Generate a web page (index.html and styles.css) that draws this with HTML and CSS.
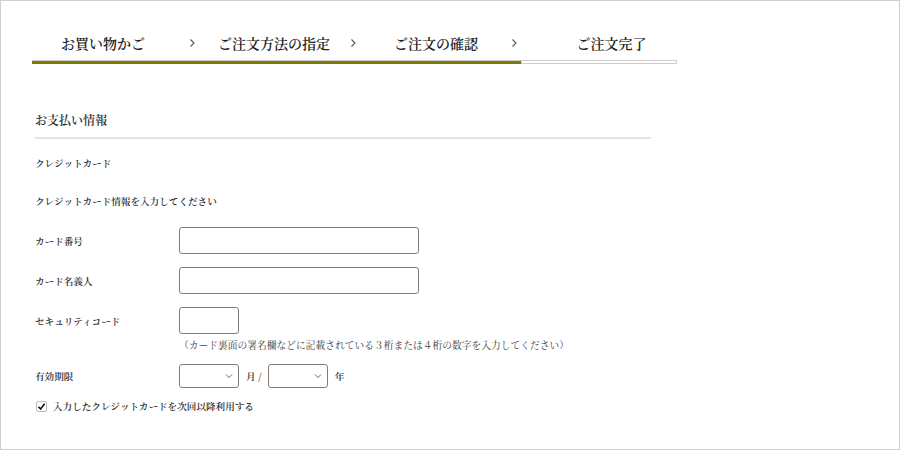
FILE: index.html
```html
<!DOCTYPE html>
<html lang="ja">
<head>
    <meta charset="UTF-8">
    <meta name="viewport" content="width=device-width, initial-scale=1.0">
    <title>お支払い情報</title>
    <link rel="stylesheet" href="styles.css">
</head>
<body>
    <div class="page">
        <!-- Steps -->
        <ol class="steps">
            <li class="step step-1">お買い物かご</li>
            <li class="sep"><svg width="7" height="10" viewBox="0 0 7 10"><polyline points="1.5,1.5 5,5 1.5,8.5" fill="none" stroke="#555" stroke-width="1.1"/></svg></li>
            <li class="step step-2">ご注文方法の指定</li>
            <li class="sep"><svg width="7" height="10" viewBox="0 0 7 10"><polyline points="1.5,1.5 5,5 1.5,8.5" fill="none" stroke="#555" stroke-width="1.1"/></svg></li>
            <li class="step step-3">ご注文の確認</li>
            <li class="sep"><svg width="7" height="10" viewBox="0 0 7 10"><polyline points="1.5,1.5 5,5 1.5,8.5" fill="none" stroke="#555" stroke-width="1.1"/></svg></li>
            <li class="step step-4">ご注文完了</li>
        </ol>
        <div class="progress">
            <div class="progress-fill"></div>
            <div class="progress-rest"></div>
        </div>

        <!-- Payment -->
        <section class="payment">
            <h2 class="section-title">お支払い情報</h2>
            <p class="method">クレジットカード</p>
            <p class="lead">クレジットカード情報を入力してください</p>

            <div class="form-row">
                <label class="form-label">カード番号</label>
                <input type="text" class="field field-wide">
            </div>
            <div class="form-row">
                <label class="form-label">カード名義人</label>
                <input type="text" class="field field-wide">
            </div>
            <div class="form-row">
                <label class="form-label">セキュリティコード</label>
                <input type="text" class="field field-short">
            </div>
            <p class="note">（カード裏面の署名欄などに記載されている３桁または４桁の数字を入力してください）</p>

            <div class="form-row form-row-expiry">
                <label class="form-label">有効期限</label>
                <div class="expiry">
                    <span class="select-wrap">
                        <select class="select"><option></option></select>
                        <svg class="select-arrow" width="8" height="6" viewBox="0 0 8 6"><polyline points="1,1.5 4,4.5 7,1.5" fill="none" stroke="#666" stroke-width="1"/></svg>
                    </span>
                    <span class="unit">月 /</span>
                    <span class="select-wrap">
                        <select class="select"><option></option></select>
                        <svg class="select-arrow" width="8" height="6" viewBox="0 0 8 6"><polyline points="1,1.5 4,4.5 7,1.5" fill="none" stroke="#666" stroke-width="1"/></svg>
                    </span>
                    <span class="unit">年</span>
                </div>
            </div>

            <label class="save">
                <span class="checkbox"><svg width="9" height="9" viewBox="0 0 9 9"><polyline points="1.5,4.8 3.6,7 7.6,1.8" fill="none" stroke="#111" stroke-width="1.6"/></svg></span>
                入力したクレジットカードを次回以降利用する
            </label>
        </section>
    </div>
</body>
</html>
```

FILE: styles.css
```css
* {
    margin: 0;
    padding: 0;
    box-sizing: border-box;
}

body {
    background-color: #fff;
    color: #2b2b2b;
    font-family: "Noto Serif CJK JP", "Noto Sans CJK JP", serif;
}

.page {
    width: 900px;
    height: 450px;
    border: 1px solid #cfcfcf;
    padding: 32px 0 0 31px;
}

/* Steps */
.steps {
    list-style: none;
    display: grid;
    grid-template-columns: 142px 36px 128px 30px 136px 20px 1fr;
    width: 645px;
    height: 20px;
    align-items: center;
}

.step {
    text-align: center;
    font-size: 14px;
    font-weight: 600;
    line-height: 20px;
    color: #222;
}

.step-4 {
    padding-left: 22px;
}

.sep {
    display: flex;
    justify-content: center;
    align-items: center;
}

.progress {
    display: flex;
    width: 645px;
    height: 4px;
    margin-top: 7px;
    border-top: 1px solid #cdcdcd;
}

.progress-fill {
    width: 489px;
    height: 3px;
    background-color: #7d7a05;
}

.progress-rest {
    flex: 1;
    height: 3px;
    border: 1px solid #cdcdcd;
    border-top: none;
}

/* Payment */
.payment {
    width: 616px;
    margin-left: 3px;
    margin-top: 47px;
}

.section-title {
    font-size: 12px;
    font-weight: 600;
    line-height: 18px;
    padding-bottom: 8px;
    border-bottom: 2px solid #e2e2e2;
}

.method,
.lead,
.form-label,
.note,
.unit,
.save {
    font-size: 9.6px;
    font-weight: 600;
    line-height: 16px;
    color: #2b2b2b;
}

.method {
    margin-top: 16px;
}

.lead {
    margin-top: 22px;
    margin-bottom: 18px;
}

.form-row {
    display: grid;
    grid-template-columns: 144px 1fr;
    align-items: center;
    margin-bottom: 13px;
}

.field {
    height: 27px;
    border: 1.5px solid #857b72;
    border-radius: 3px;
    background: #fff;
}

.field-wide {
    width: 240px;
}

.field-short {
    width: 60px;
}

.note {
    margin: -9px 0 0 144px;
    font-size: 9.75px;
    font-weight: 400;
    line-height: 14px;
    color: #444;
}

.form-row-expiry {
    margin-top: 12px;
    margin-bottom: 10px;
}

.expiry {
    display: flex;
    align-items: center;
}

.select-wrap {
    position: relative;
    display: inline-block;
}

.select {
    appearance: none;
    -webkit-appearance: none;
    width: 60px;
    height: 24px;
    border: 1.5px solid #857b72;
    border-radius: 3px;
    background: #fff;
    display: block;
}

.select-arrow {
    position: absolute;
    right: 6px;
    top: 9px;
}

.unit {
    margin: 0 6px 0 7px;
}

.save {
    display: flex;
    align-items: center;
    margin-left: 1px;
}

.checkbox {
    display: flex;
    align-items: center;
    justify-content: center;
    width: 11px;
    height: 11px;
    border: 1px solid #bdbdbd;
    border-radius: 2px;
    margin-right: 6px;
}
```
